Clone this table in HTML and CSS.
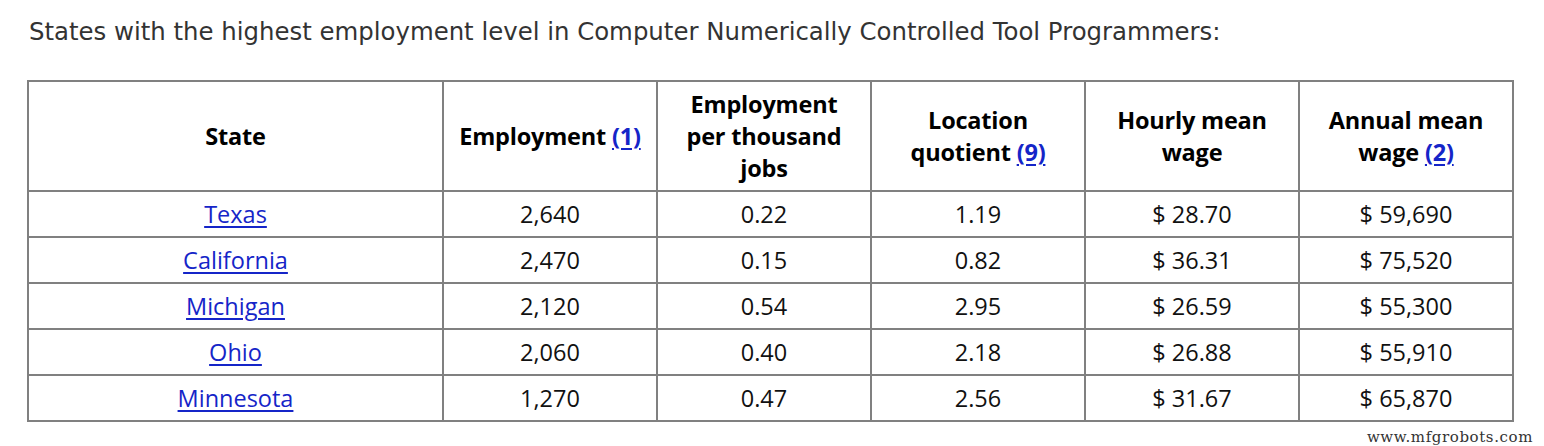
FILE: index.html
```html
<!DOCTYPE html>
<html lang="en">
<head>
<meta charset="utf-8">
<title>States with the highest employment level</title>
<link rel="stylesheet" href="styles.css">
</head>
<body>
<div class="page">
  <p class="title">States with the highest employment level in Computer Numerically Controlled Tool Programmers:</p>
  <table class="data">
    <colgroup>
      <col class="w-state">
      <col class="w-num"><col class="w-num"><col class="w-num"><col class="w-num"><col class="w-num">
    </colgroup>
    <thead>
      <tr>
        <th>State</th>
        <th>Employment <a href="#">(1)</a></th>
        <th>Employment per thousand jobs</th>
        <th>Location quotient <a href="#">(9)</a></th>
        <th>Hourly mean wage</th>
        <th>Annual mean wage <a href="#">(2)</a></th>
      </tr>
    </thead>
    <tbody>
      <tr><td><a href="#">Texas</a></td><td>2,640</td><td>0.22</td><td>1.19</td><td>$ 28.70</td><td>$ 59,690</td></tr>
      <tr><td><a href="#">California</a></td><td>2,470</td><td>0.15</td><td>0.82</td><td>$ 36.31</td><td>$ 75,520</td></tr>
      <tr><td><a href="#">Michigan</a></td><td>2,120</td><td>0.54</td><td>2.95</td><td>$ 26.59</td><td>$ 55,300</td></tr>
      <tr><td><a href="#">Ohio</a></td><td>2,060</td><td>0.40</td><td>2.18</td><td>$ 26.88</td><td>$ 55,910</td></tr>
      <tr><td><a href="#">Minnesota</a></td><td>1,270</td><td>0.47</td><td>2.56</td><td>$ 31.67</td><td>$ 65,870</td></tr>
    </tbody>
  </table>
  <div class="mark">www.mfgrobots.com</div>
</div>
</body>
</html>
```
FILE: styles.css
```css
html, body {
  margin: 0;
  padding: 0;
  background: #ffffff;
}
.page {
  width: 1544px;
  height: 446px;
  padding: 0 0 0 27px;
  box-sizing: border-box;
  position: relative;
}
.title {
  margin: 0;
  padding: 15px 0 0 2px;
  font-family: "DejaVu Sans", Verdana, sans-serif;
  font-size: 24.4px;
  line-height: 34px;
  color: #333333;
  height: 65px;
  box-sizing: content-box;
  white-space: nowrap;
}
.data {
  border-collapse: collapse;
  table-layout: fixed;
  width: 1487px;
  font-family: "Open Sans", "Source Sans Pro", sans-serif;
  color: #111111;
  border: 2px solid #808080;
}
.w-state { width: 415px; }
.w-num { width: 214px; }
.data th, .data td {
  border: 2px solid #808080;
  text-align: center;
  padding: 0 12px;
}
.data th {
  font-weight: 700;
  font-size: 23.5px;
  line-height: 32px;
  height: 108px;
  color: #000000;
  letter-spacing: -0.2px;
}
.data td {
  font-size: 23.5px;
  height: 44px;
  line-height: 30px;
}
.data a {
  color: #1525c8;
  text-decoration: underline;
  text-decoration-thickness: 2px;
  text-underline-offset: 3px;
}
.mark {
  position: absolute;
  right: 11px;
  bottom: 0;
  font-family: "DejaVu Serif", "Liberation Serif", serif;
  font-size: 15px;
  letter-spacing: 0.6px;
  line-height: 18px;
  color: #333333;
}
```
